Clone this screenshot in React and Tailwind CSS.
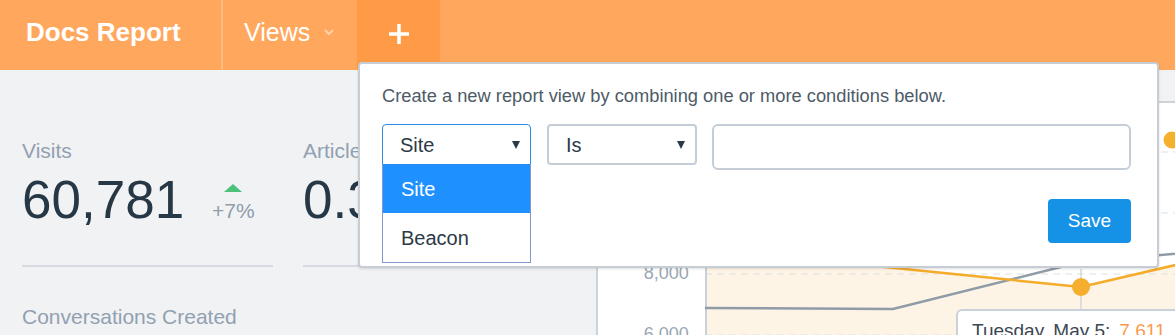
import React from "react";

const orangePts = [
  [0, 97],
  [150, 161],
  [376, 184],
  [595, 133],
];
const grayPts = [
  [0, 205],
  [188, 206],
  [376, 159],
  [595, 140],
];

const toPath = (pts) => pts.map((p, i) => `${i === 0 ? "M" : "L"}${p[0]} ${p[1]}`).join(" ");

const Stat = ({ label, value, change }) => (
  <div className="w-[251px]">
    <div className="text-[21px] leading-none text-[#91a1b1]">{label}</div>
    <div className="mt-[12px] flex items-end">
      <div className="text-[53px] leading-none text-[#263746]">{value}</div>
      {change && (
        <div className="ml-[28px] mb-[5px] flex flex-col items-center">
          <div className="w-0 h-0 border-l-[9px] border-r-[9px] border-b-[8px] border-l-transparent border-r-transparent border-b-[#4cc17a]" />
          <div className="mt-[8px] text-[21px] leading-none text-[#8e9dac]">{change}</div>
        </div>
      )}
    </div>
    <div className="mt-[39px] h-[2px] bg-[#d5dbe1]" />
  </div>
);

const Chart = () => (
  <div className="relative mt-[31px] w-[640px] h-[300px] shrink-0 rounded-[4px] border-2 border-[#ccd3da] bg-white flex">
    <div className="w-[107px] pt-[18px] pr-[16px] flex flex-col">
      {["12,000", "10,000", "8,000", "6,000"].map((l) => (
        <div key={l} className="h-[61px] flex items-center justify-end text-[18px] text-[#9aa7b4]">
          {l}
        </div>
      ))}
    </div>
    <svg width="531" height="296" className="block">
      <path d={`${toPath(orangePts)} L595 296 L0 296 Z`} fill="#fdf4e6" />
      {[49, 110, 171, 232].map((y) => (
        <line key={y} x1="0" x2="531" y1={y} y2={y} stroke="#dedfe0" strokeWidth="1" strokeDasharray="7 5" />
      ))}
      <line x1="1" x2="1" y1="0" y2="296" stroke="#c8d0d8" strokeWidth="2" />
      <line x1="376" x2="376" y1="159" y2="296" stroke="#d3d7db" strokeWidth="1.5" />
      <path d={toPath(grayPts)} fill="none" stroke="#8f9ba7" strokeWidth="2.5" />
      <path d={toPath(orangePts)} fill="none" stroke="#f5ac2a" strokeWidth="2.5" />
      <circle cx="376" cy="159" r="6" fill="#8d99a5" stroke="#fff" strokeWidth="2" />
      <circle cx="376" cy="184" r="9" fill="#f5ae2d" />
      <circle cx="467" cy="37" r="8.5" fill="#f5b02e" />
    </svg>
    <div className="absolute left-[358px] top-[206px] w-[260px] h-[70px] rounded-[6px] border-2 border-[#c9d1d9] bg-white px-[14px] pt-[10px]">
      <div className="flex text-[19px] leading-none whitespace-nowrap">
        <span className="text-[#3b4752]">Tuesday, May 5:</span>
        <span className="ml-[9px] text-[#fb9a4f]">7,611</span>
      </div>
    </div>
  </div>
);

const Select = ({ value, open }) => (
  <div className="relative">
    <div
      className={`h-[41px] flex items-center justify-between pl-[17px] pr-[10px] text-[20px] leading-none text-[#2c3a47] bg-white ${
        open ? "w-[149px] border-[1.5px] border-[#2a8ce6] rounded-t-[4px]" : "w-[150px] border-2 border-[#c4cdd5] rounded-[4px]"
      }`}
    >
      <span>{value}</span>
      <span className="w-0 h-0 border-l-[4.5px] border-r-[4.5px] border-t-[8px] border-l-transparent border-r-transparent border-t-[#2d3a46]" />
    </div>
    {open && (
      <div className="absolute left-0 top-[41px] w-[149px] border border-t-0 border-[#8199c6] bg-white">
        <div className="h-[48px] flex items-center pl-[18px] text-[20px] leading-none bg-[#1e90ff] text-white">Site</div>
        <div className="h-[49px] flex items-center pl-[18px] text-[20px] leading-none text-[#2c3a47]">Beacon</div>
      </div>
    )}
  </div>
);

export default function App() {
  return (
    <div className="relative w-[1175px] h-[335px] overflow-hidden bg-[#f1f2f4] font-['Liberation_Sans',Arial,sans-serif]">
      <header className="h-[70px] bg-[#ffa75d] flex text-white">
        <div className="w-[221px] pl-[26px] pb-[6px] flex items-center text-[26px] font-bold leading-none">Docs Report</div>
        <div className="w-[2px] bg-[#ffbb80]" />
        <div className="w-[134px] pl-[21px] pb-[6px] flex items-center text-[25px] leading-none">
          Views
          <svg width="10" height="7" viewBox="0 0 10 7" className="ml-[14px]">
            <path d="M1 1 L5 5 L9 1" fill="none" stroke="#ffd2aa" strokeWidth="2" />
          </svg>
        </div>
        <div className="w-[83px] bg-[#ff9b46] flex items-center justify-center pb-[3px]">
          <svg width="22" height="22" viewBox="0 0 22 22">
            <path d="M11 1 V21 M1 11 H21" stroke="#fff" strokeWidth="3.5" />
          </svg>
        </div>
      </header>

      <main className="flex items-start pl-[22px]">
        <div className="pt-[70px] flex gap-[30px]">
          <div>
            <Stat label="Visits" value="60,781" change="+7%" />
            <div className="mt-[39px] text-[21px] leading-none text-[#91a1b1]">Conversations Created</div>
          </div>
          <Stat label="Articles per Visit" value="0.32" />
        </div>
        <div className="ml-[42px]">
          <Chart />
        </div>
      </main>

      <div className="absolute left-[358px] top-[62px] w-[801px] h-[206px] rounded-[4px] border-2 border-[#c6cdd4] bg-white shadow-sm pl-[22px] pr-[26px] pt-[23px]">
        <p className="text-[18.3px] leading-none text-[#4d5b67]">
          Create a new report view by combining one or more conditions below.
        </p>
        <div className="mt-[19px] flex items-start">
          <Select value="Site" open />
          <div className="ml-[16px]">
            <Select value="Is" />
          </div>
          <input className="ml-[15px] flex-1 h-[46px] rounded-[6px] border-2 border-[#c5ced6] bg-white outline-none" />
        </div>
        <div className="mt-[29px] flex justify-end">
          <button className="w-[83px] h-[44px] rounded-[4px] bg-[#1592e6] text-white text-[19px] font-medium">Save</button>
        </div>
      </div>
    </div>
  );
}
